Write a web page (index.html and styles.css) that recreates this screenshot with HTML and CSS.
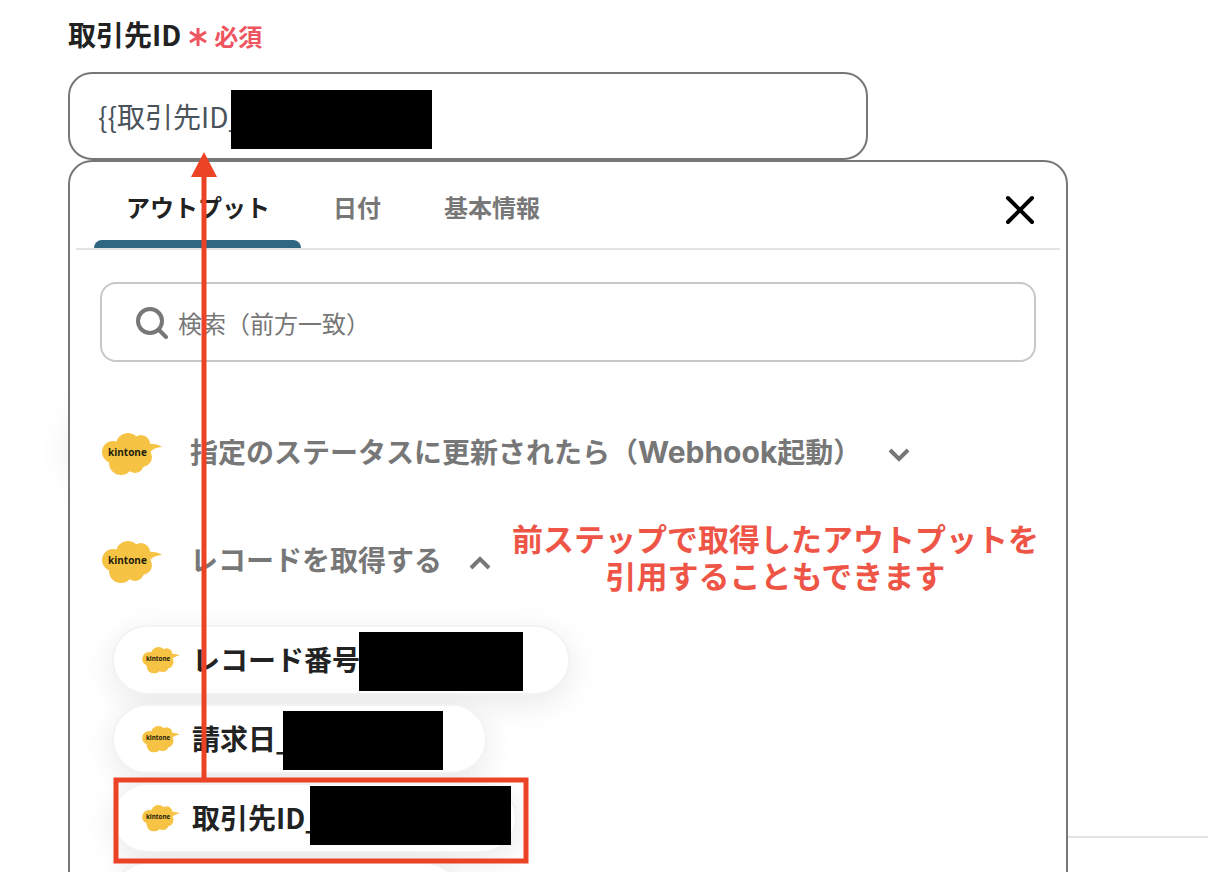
FILE: index.html
```
<!DOCTYPE html>
<html lang="ja">
<head>
  <meta charset="UTF-8" />
  <meta name="viewport" content="width=device-width, initial-scale=1.0"/>
  <title>取引先ID</title>
  <link rel="stylesheet" href="styles.css">
</head>
<body>

  <main class="page">
    <div class="field">
      <label class="field-label" for="clientId">
        取引先ID
        <span class="required">
          <svg width="18" height="22" viewBox="0 0 18 22" aria-hidden="true">
            <path d="M9 3v18M1 7l16 10M17 7L1 17" stroke="currentColor" stroke-width="3"/>
          </svg>
          必須
        </span>
      </label>
      <input class="field-input" type="text" id="clientId" value="{{取引先ID_">

      <!-- Output picker -->
      <section class="picker">
        <div class="picker-head">
          <div class="tabs" role="tablist">
            <button class="tab active" role="tab" aria-selected="true">アウトプット</button>
            <button class="tab" role="tab">日付</button>
            <button class="tab" role="tab">基本情報</button>
          </div>
          <button class="close" aria-label="閉じる">
            <svg width="32" height="32" viewBox="0 0 32 32">
              <path d="M4 4l24 24M28 4L4 28" stroke="#000" stroke-width="4" stroke-linecap="round"/>
            </svg>
          </button>
        </div>

        <div class="picker-body">
          <div class="search">
            <svg width="34" height="34" viewBox="0 0 34 34" aria-hidden="true">
              <circle cx="14" cy="16" r="12" fill="none" stroke="#777" stroke-width="4"/>
              <path d="M23 25l7 7" stroke="#777" stroke-width="4" stroke-linecap="round"/>
            </svg>
            <input type="text" placeholder="検索（前方一致）" aria-label="検索（前方一致）">
          </div>

          <button class="group">
            <!-- the other logos reuse this one -->
            <svg class="logo" viewBox="0 0 60 43">
              <g id="kintone">
                <g fill="#f6c344">
                  <circle cx="11" cy="19" r="11"/>
                  <circle cx="26" cy="12" r="12"/>
                  <circle cx="39" cy="11" r="9"/>
                  <circle cx="40" cy="24" r="10"/>
                  <circle cx="19" cy="30" r="12"/>
                  <circle cx="33" cy="31" r="9"/>
                  <rect x="14" y="10" width="28" height="22"/>
                  <path d="M45 11 Q54 10 60 14 Q52 14 47 20 Z"/>
                </g>
                <text x="6" y="23" class="logo-text">kintone</text>
              </g>
            </svg>
            <span class="group-name">指定のステータスに更新されたら（<span class="latin">Webhook</span>起動）</span>
            <svg class="chevron" viewBox="0 0 24 16"><path d="M3 4l9 9l9-9"/></svg>
          </button>

          <button class="group">
            <svg class="logo" viewBox="0 0 60 43"><use href="#kintone"/></svg>
            <span class="group-name">レコードを取得する</span>
            <svg class="chevron" viewBox="0 0 24 16"><path d="M3 14l9-9l9 9"/></svg>
          </button>

          <div class="chips">
            <button class="chip chip-record">
              <svg class="logo" viewBox="0 0 60 43"><use href="#kintone"/></svg>
              <span class="chip-name">レコード番号_</span>
            </button>
            <button class="chip chip-date">
              <svg class="logo" viewBox="0 0 60 43"><use href="#kintone"/></svg>
              <span class="chip-name">請求日_</span>
            </button>
            <button class="chip chip-client">
              <svg class="logo" viewBox="0 0 60 43"><use href="#kintone"/></svg>
              <span class="chip-name">取引先ID_</span>
            </button>
            <button class="chip chip-next" aria-hidden="true"></button>
          </div>
        </div>
      </section>
    </div>

    <div class="step-handle"></div>
    <hr class="divider">

    <!-- Annotations drawn over the page -->
    <svg class="marks" width="1208" height="872" aria-hidden="true">
      <rect x="231" y="90" width="201" height="59"/>
      <rect x="359" y="632" width="164" height="59"/>
      <rect x="283" y="711" width="160" height="59"/>
      <rect x="310" y="786" width="201" height="59"/>
      <g stroke="#ec4226" stroke-width="5" fill="none">
        <path d="M204 778V174"/>
        <rect x="116" y="780" width="410" height="81"/>
      </g>
      <path d="M204 152l13 25h-26z" fill="#ec4226"/>
    </svg>
    <p class="note">前ステップで取得したアウトプットを<br>引用することもできます</p>
  </main>

</body>
</html>
```
FILE: styles.css
```
* {
  box-sizing: border-box;
  margin: 0;
  padding: 0;
}

body,
button,
input {
  font-family: "Noto Sans CJK JP", sans-serif;
}

body {
  background: #fff;
  color: #222;
}

button {
  background: none;
  border: none;
  cursor: pointer;
}

.page {
  position: relative;
  height: 100vh;
  overflow: hidden;
  padding: 16px 140px 0 68px;
}

/* Field */
.field {
  position: relative;
  z-index: 1;
  max-width: 1000px;
}

.field-label {
  display: flex;
  align-items: center;
  gap: 8px;
  height: 36px;
  margin-bottom: 20px;
  font-size: 28px;
  font-weight: bold;
}

.required {
  display: flex;
  align-items: center;
  gap: 7px;
  padding-top: 3px;
  color: #ee5560;
  font-size: 24px;
}

.field-input {
  display: block;
  width: 80%;
  height: 88px;
  padding: 0 28px;
  border: 2px solid #777;
  border-radius: 24px;
  color: #4b535b;
  font-size: 28px;
}

/* Picker */
.picker {
  position: absolute;
  top: 100%;
  left: 0;
  width: 100%;
  background: #fff;
  border: 2px solid #777;
  border-radius: 24px;
}

.picker-head {
  display: flex;
  justify-content: space-between;
  align-items: center;
  height: 88px;
  margin: 0 6px;
  padding: 0 24px 0 18px;
  border-bottom: 2px solid #e4e4e4;
}

.tabs {
  display: flex;
  height: 100%;
}

.tab {
  position: relative;
  padding: 2px 31px 0 32px;
  color: #777;
  font-size: 24px;
  font-weight: bold;
}

.tab.active {
  color: #222;
}

.tab.active::after {
  content: "";
  position: absolute;
  left: 0;
  right: 0;
  bottom: 0;
  height: 8px;
  border-radius: 8px 8px 0 0;
  background: #2f6680;
}

.close {
  display: flex;
  padding-top: 10px;
}

.picker-body {
  padding: 32px 30px;
}

.search {
  display: flex;
  align-items: center;
  gap: 8px;
  height: 80px;
  margin-bottom: 38px;
  padding: 0 34px;
  border: 2px solid #c8c8c8;
  border-radius: 16px;
}

.search input {
  flex: 1;
  border: none;
  outline: none;
  font-size: 24px;
}

.search input::placeholder {
  color: #777;
}

.group {
  display: flex;
  align-items: center;
  height: 108px;
  color: #777;
  font-size: 28px;
  font-weight: bold;
}

.group .logo {
  width: 60px;
  height: 43px;
  margin: 0 28px 0 2px;
}

.group-name {
  padding-bottom: 6px;
}

.latin {
  font-family: Inter, sans-serif;
  font-size: 30px;
}

.chevron {
  width: 24px;
  height: 16px;
  margin-left: 26px;
  fill: none;
  stroke: #777;
  stroke-width: 4;
}

.logo-text {
  font: bold 10px "Open Sans", sans-serif;
  fill: #221c0c;
}

/* Chips */
.chips {
  display: flex;
  flex-direction: column;
  gap: 9px;
  padding: 9px 12px;
}

.chip {
  display: flex;
  align-items: center;
  gap: 12px;
  height: 70px;
  padding: 0 28px;
  border: 2px solid #f3f3f3;
  border-radius: 35px;
  background: #fff;
  box-shadow: 0 8px 32px rgba(0, 0, 0, 0.09);
  color: #222;
  font-size: 28px;
  font-weight: bold;
}

.chip .logo {
  width: 38px;
  height: 27px;
}

.chip-name {
  padding-bottom: 2px;
}

.chip-record {
  width: 458px;
}

.chip-date {
  width: 375px;
}

.chip-client {
  width: 405px;
}

.chip-next {
  width: 348px;
}

/* Page behind the picker */
.step-handle {
  position: absolute;
  top: 410px;
  left: 76px;
  width: 80px;
  height: 80px;
  border-radius: 50%;
  box-shadow: 0 0 40px rgba(0, 0, 0, 0.12);
}

.divider {
  position: absolute;
  top: 836px;
  left: 0;
  right: 0;
  margin-left: 68px;
  border: none;
  border-top: 2px solid #e4e4e4;
}

/* Annotations */
.marks {
  position: absolute;
  top: 0;
  left: 0;
  z-index: 2;
  pointer-events: none;
}

.note {
  position: absolute;
  top: 519px;
  left: 512px;
  z-index: 2;
  color: #ee5546;
  font-size: 31px;
  font-weight: bold;
  line-height: 37px;
  text-align: center;
  white-space: nowrap;
}
```
